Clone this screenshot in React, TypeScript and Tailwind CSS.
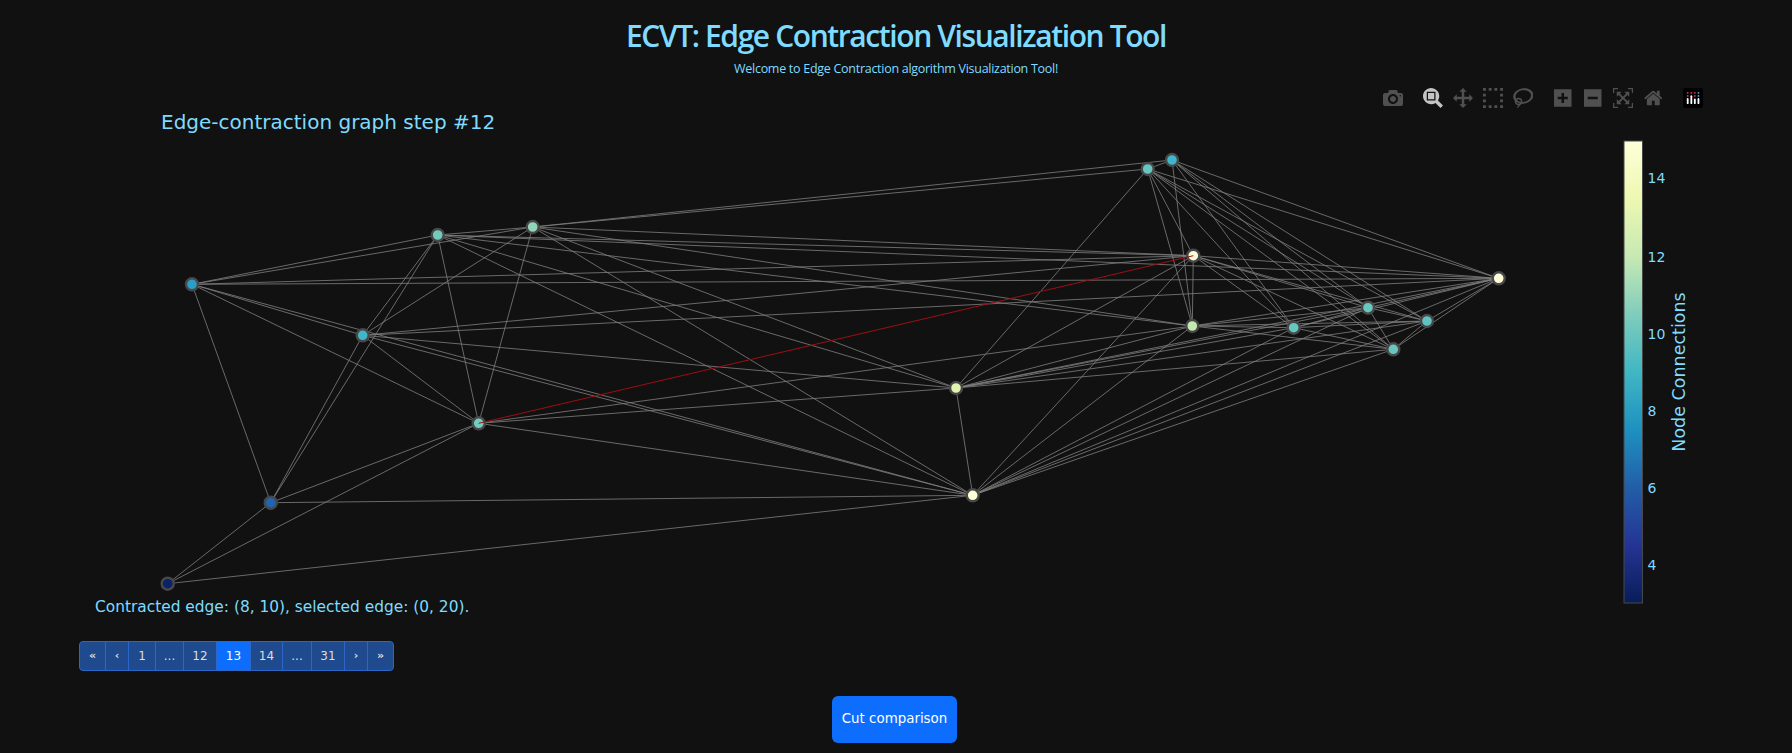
const NODES: Record<string, [number, number, string]> = {
  A: [1147.7, 169, '#66c7c0'],
  B: [1172, 160, '#3fb6cb'],
  C: [1193.3, 255.7, '#fffbd8'],
  D: [1498.7, 278.3, '#fffdd9'],
  E: [1192.3, 326, '#c5e8b0'],
  F: [1293.7, 327.7, '#66c7c0'],
  G: [1368, 307.7, '#69c8bf'],
  H: [1427, 321, '#5ec3c1'],
  I: [1393.3, 349.3, '#68c6bf'],
  J: [192, 284.3, '#2b9ec8'],
  K: [437.7, 235, '#73cbbd'],
  L: [532.7, 227, '#91d6ba'],
  M: [362.7, 335.3, '#41b6c9'],
  N: [478.7, 423.3, '#73cdbf'],
  O: [956, 388, '#e3f3b0'],
  P: [972.7, 495.3, '#ffffd9'],
  Q: [270.7, 502.7, '#2165b0'],
  R: [167.7, 583.7, '#0a2268'],
};

const EDGES =
  'JK JL JC JD JM JP JN JQ KL KM KQ KN KC KD KE KO KP LM LN LA LB LC LE LO LP MC MD MO MN MP MQ NE NO NP NQ NR QR QP RP AB AC AE AF AG AH AI AD AO BE BF BG BH BI BD CE CF CG CH CI CD CO CP EF EG EH EI ED EO EP FG FH FI FD FO FP GH GI GD GO GP HI HD HO HP ID IO IP DO DP OP'.split(
    ' ',
  );

const TICKS: [string, number][] = [
  ['14', 178],
  ['12', 256.7],
  ['10', 333.5],
  ['8', 410.5],
  ['6', 488],
  ['4', 565],
];

const PAGES = [
  { label: '«', width: 'w-[25px]', small: true },
  { label: '‹', width: 'w-[23px]', small: true },
  { label: '1', width: 'w-[27px]' },
  { label: '...', width: 'w-[28px]' },
  { label: '12', width: 'w-[33px]' },
  { label: '13', width: 'w-[34px]', active: true },
  { label: '14', width: 'w-[32px]' },
  { label: '...', width: 'w-[29px]' },
  { label: '31', width: 'w-[33px]' },
  { label: '›', width: 'w-[23px]', small: true },
  { label: '»', width: 'w-[26px]', small: true },
];

function ModeIcon({ d, vbWidth = 1000, active = false }: { d: string; vbWidth?: number; active?: boolean }) {
  return (
    <div className="flex w-[30px] justify-center">
      <svg viewBox={`0 0 ${vbWidth} 1000`} className={`h-5 ${active ? 'fill-[#c4c4c4]' : 'fill-[#505050]'}`}>
        <path d={d} transform="matrix(1 0 0 -1 0 850)" />
      </svg>
    </div>
  );
}

function Modebar() {
  return (
    <div className="absolute top-[2px] right-[84px] flex gap-[10px]">
      <div className="flex">
        <ModeIcon d="m500 450c-83 0-150-67-150-150 0-83 67-150 150-150 83 0 150 67 150 150 0 83-67 150-150 150z m400 150h-120c-16 0-34 13-39 29l-31 93c-6 15-23 28-40 28h-340c-16 0-34-13-39-28l-31-94c-6-15-23-28-40-28h-120c-55 0-100-45-100-100v-450c0-55 45-100 100-100h800c55 0 100 45 100 100v450c0 55-45 100-100 100z m-400-550c-138 0-250 112-250 250 0 138 112 250 250 250 138 0 250-112 250-250 0-138-112-250-250-250z m365 380c-19 0-35 16-35 35 0 19 16 35 35 35 19 0 35-16 35-35 0-19-16-35-35-35z" />
      </div>
      <div className="flex">
        <ModeIcon
          active
          d="m1000-25l-250 251c40 63 63 138 63 218 0 224-182 406-407 406-224 0-406-182-406-406s183-406 407-406c80 0 155 22 218 62l250-250 125 125z m-812 250l0 438 437 0 0-438-437 0z m62 375l313 0 0-312-313 0 0 312z"
        />
        <ModeIcon d="m1000 350l-187 188 0-125-250 0 0 250 125 0-188 187-187-187 125 0 0-250-250 0 0 125-188-188 186-187 0 125 252 0 0-250-125 0 187-188 188 188-125 0 0 250 250 0 0-126 187 188z" />
        <ModeIcon d="m0 850l0-143 143 0 0 143-143 0z m286 0l0-143 143 0 0 143-143 0z m285 0l0-143 143 0 0 143-143 0z m286 0l0-143 143 0 0 143-143 0z m-857-286l0-143 143 0 0 143-143 0z m857 0l0-143 143 0 0 143-143 0z m-857-285l0-143 143 0 0 143-143 0z m857 0l0-143 143 0 0 143-143 0z m-857-286l0-143 143 0 0 143-143 0z m286 0l0-143 143 0 0 143-143 0z m285 0l0-143 143 0 0 143-143 0z m286 0l0-143 143 0 0 143-143 0z" />
        <ModeIcon
          vbWidth={1031}
          d="m1018 538c-36 207-290 336-568 286-277-48-473-256-436-463 10-57 36-108 76-151-13-66 11-137 68-183 34-28 75-41 114-42l-55-70 0 0c-2-1-3-2-4-3-10-14-8-34 5-45 14-11 34-8 45 4 1 1 2 3 2 5l0 0 113 140c16 11 31 24 45 40 4 3 6 7 8 11 48-3 100 0 151 9 278 48 473 255 436 462z m-624-379c-80 14-149 48-197 96 42 42 109 47 156 9 33-26 47-66 41-105z m-187-74c-19 16-33 37-39 60 50-32 109-55 174-68-42-25-95-24-135 8z m360 75c-34-7-69-9-102-8 8 62-16 128-68 170-73 59-175 54-244-5-9 20-16 40-20 61-28 159 121 317 333 354s407-60 434-217c28-159-121-318-333-355z"
        />
      </div>
      <div className="flex">
        <ModeIcon
          vbWidth={875}
          d="m1 787l0-875 875 0 0 875-875 0z m687-500l-187 0 0-187-125 0 0 187-188 0 0 125 188 0 0 187 125 0 0-187 187 0 0-125z"
        />
        <ModeIcon vbWidth={875} d="m0 788l0-876 875 0 0 876-875 0z m688-500l-500 0 0 125 500 0 0-125z" />
        <ModeIcon d="m250 850l-187 0-63 0 0-62 0-188 63 0 0 188 187 0 0 62z m688 0l-188 0 0-62 188 0 0-188 62 0 0 188 0 62-62 0z m-875-938l0 188-63 0 0-188 0-62 63 0 187 0 0 62-187 0z m875 188l0-188-188 0 0-62 188 0 62 0 0 62 0 188-62 0z m-125 188l-1 0-93-94-156 156 156 156 92-93 2 0 0 250-250 0 0-2 93-92-156-156-156 156 94 92 0 2-250 0 0-250 0 0 93 93 157-156-157-156-93 94 0 0 0-250 250 0 0 0-94 93 156 157 156-157-93-93 0 0 250 0 0 250z" />
        <ModeIcon
          vbWidth={928.6}
          d="m786 296v-267q0-15-11-26t-25-10h-214v214h-143v-214h-214q-15 0-25 10t-11 26v267q0 1 0 2t0 2l321 264 321-264q1-1 1-4z m124 39l-34-41q-5-5-12-6h-2q-7 0-12 3l-386 322-386-322q-7-4-13-4-7 2-12 7l-35 41q-4 5-3 13t6 12l401 334q18 15 42 15t43-15l136-114v109q0 8 5 13t13 5h107q8 0 13-5t5-13v-227l122-102q5-5 6-12t-4-13z"
        />
      </div>
      {/* plotly logo */}
      <div className="flex w-[30px] justify-center">
        <svg viewBox="0 0 132 132" className="h-5 w-5">
          <rect width="132" height="132" rx="14" fill="#000" />
          <circle cx="31" cy="32" r="6" fill="#e0306e" />
          <circle cx="55" cy="32" r="6" fill="#e0306e" />
          <circle cx="78" cy="32" r="6" fill="#e0306e" />
          <circle cx="102" cy="32" r="6" fill="#3fb6d0" />
          <circle cx="31" cy="52" r="6" fill="#e0306e" />
          <circle cx="78" cy="52" r="6" fill="#e0306e" />
          <circle cx="102" cy="52" r="6" fill="#3fb6d0" />
          <rect x="25" y="66" width="12" height="40" rx="6" fill="#fff" />
          <rect x="49" y="48" width="12" height="58" rx="6" fill="#fff" />
          <rect x="72" y="70" width="12" height="36" rx="6" fill="#fff" />
          <rect x="96" y="66" width="12" height="40" rx="6" fill="#fff" />
        </svg>
      </div>
    </div>
  );
}

function GraphPlot() {
  return (
    <svg viewBox="0 86 1792 510" className="block h-[510px] w-full overflow-visible font-['DejaVu_Sans',sans-serif]">
      <defs>
        <linearGradient id="ylgnbu" x1="0" y1="0" x2="0" y2="1">
          <stop offset="0" stopColor="#ffffd9" />
          <stop offset="0.125" stopColor="#edf8b1" />
          <stop offset="0.25" stopColor="#c7e9b4" />
          <stop offset="0.375" stopColor="#7fcdbb" />
          <stop offset="0.5" stopColor="#41b6c4" />
          <stop offset="0.625" stopColor="#1d91c0" />
          <stop offset="0.75" stopColor="#225ea8" />
          <stop offset="0.875" stopColor="#253494" />
          <stop offset="1" stopColor="#081d58" />
        </linearGradient>
      </defs>

      <text x="161" y="129" fontSize="20" fill="#7fdbff">
        Edge-contraction graph step #12
      </text>

      {EDGES.map((e) => {
        const a = NODES[e[0]];
        const b = NODES[e[1]];
        return <line key={e} x1={a[0]} y1={a[1]} x2={b[0]} y2={b[1]} stroke="#808080" strokeWidth="0.8" />;
      })}

      {Object.entries(NODES).map(([id, [x, y, color]]) => (
        <circle key={id} cx={x} cy={y} r="6" fill={color} stroke="#484848" strokeWidth="2.4" />
      ))}

      <line x1={NODES.N[0]} y1={NODES.N[1]} x2={NODES.C[0]} y2={NODES.C[1]} stroke="#a00d12" strokeWidth="1" />

      <rect x="1624" y="141" width="18.5" height="462" fill="url(#ylgnbu)" stroke="#484848" strokeWidth="1" />
      {TICKS.map(([label, y]) => (
        <text key={label} x="1647.5" y={y + 5} fontSize="14" fill="#7fdbff">
          {label}
        </text>
      ))}
      <text transform="translate(1685 372) rotate(-90)" textAnchor="middle" fontSize="17.5" fill="#7fdbff">
        Node Connections
      </text>
    </svg>
  );
}

export default function App() {
  return (
    <div className="h-[753px] overflow-hidden bg-[#111111] text-[#7fdbff]">
      <h1 className="pt-[16px] text-center font-['Open_Sans',sans-serif] text-[30px] leading-[40px] font-semibold tracking-[-1.4px]">
        ECVT: Edge Contraction Visualization Tool
      </h1>
      <p className="text-center font-['Open_Sans',sans-serif] text-[12.5px] leading-[26px] tracking-[-0.28px]">
        Welcome to Edge Contraction algorithm Visualization Tool!
      </p>

      <div className="relative mt-[4px]">
        <GraphPlot />
        <Modebar />
      </div>

      <div className="pl-[95px] font-['DejaVu_Sans',sans-serif] text-[15.4px] leading-[22px]">
        Contracted edge: (8, 10), selected edge: (0, 20).
      </div>

      <div className="mt-[23px] ml-[79px] flex h-[30px] w-[315px] overflow-hidden rounded border border-[#2a67c9] bg-[#1f4a8e] font-['DejaVu_Sans',sans-serif] text-[#dddddd]">
        {PAGES.map((page, i) => (
          <span
            key={i}
            className={`flex items-center justify-center ${page.width} ${i > 0 ? 'border-l border-[#2a67c9]' : ''} ${
              page.small ? 'text-[11px] font-bold' : 'text-[12px]'
            } ${page.active ? 'bg-[#0d6efd] text-white' : ''}`}
          >
            {page.label}
          </span>
        ))}
      </div>

      <div className="mt-[25px] flex justify-center pr-[3px]">
        <button className="h-[47px] w-[125px] rounded-md bg-[#0d6efd] font-['DejaVu_Sans',sans-serif] text-[13.4px] text-white">
          Cut comparison
        </button>
      </div>
    </div>
  );
}
